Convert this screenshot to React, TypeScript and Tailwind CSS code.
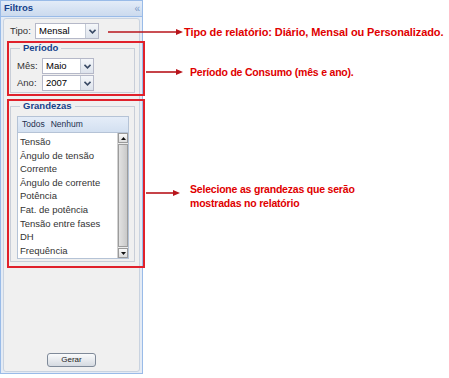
import React from "react";

const itens = [
  "Tensão",
  "Ângulo de tensão",
  "Corrente",
  "Ângulo de corrente",
  "Potência",
  "Fat. de potência",
  "Tensão entre fases",
  "DH",
  "Frequência",
];

type ComboProps = {
  value: string;
  width: string;
};

const Combo = ({ value, width }: ComboProps) => (
  <div className={`flex h-[16px] border border-[#b5b8c8] bg-white ${width}`}>
    <div className="flex-1 pl-[3px] text-[9.5px] leading-[14px] text-black">{value}</div>
    <div className="flex w-[13px] items-center justify-center border-l border-[#c4cbd6] bg-gradient-to-b from-[#f5f7fa] to-[#dde3ec]">
      <svg width="7" height="5" viewBox="0 0 7 5">
        <path d="M0.5 0.8 L3.5 3.8 L6.5 0.8" fill="none" stroke="#3a4b66" strokeWidth="1.6" />
      </svg>
    </div>
  </div>
);

const Legend = ({ label }: { label: string }) => (
  <legend className="ml-[9px] px-[3px] text-[9.5px] font-bold leading-[10px] text-[#15428b]">
    {label}
  </legend>
);

export default function App() {
  return (
    <div className="relative h-[378px] w-[449px] overflow-hidden bg-white font-['Liberation_Sans',Arial,sans-serif]">
      {/* painel Filtros */}
      <div className="flex h-[374px] w-[143px] flex-col border border-[#99bbe8] bg-[#e4ebf5]">
        <div className="flex h-[16px] items-center justify-between border-b border-[#99bbe8] bg-gradient-to-b from-[#e3ecf8] to-[#cbdaee] pl-[3px] pr-[2px]">
          <span className="text-[9.5px] font-bold text-[#15428b]">Filtros</span>
          <span className="text-[10px] leading-none text-[#7d9bc7]">«</span>
        </div>

        <div className="mx-[2px] my-[1px] flex flex-1 flex-col rounded-[3px] border border-[#c9d3e0] bg-[#f0f0f0]">
          {/* Tipo */}
          <div className="mt-[4px] flex items-center pl-[6px]">
            <span className="w-[25px] text-[9.5px] text-[#333]">Tipo:</span>
            <Combo value="Mensal" width="w-[64px]" />
          </div>

          {/* Período */}
          <div className="ml-[3px] mt-[2px] h-[55px] w-[138px] border-2 border-[#e0212b] pl-px">
            <fieldset className="h-[50px] w-[125px] border border-[#c8ced8] pt-[1px]">
              <Legend label="Período" />
              <div className="mt-[4px] flex items-center pl-[6px]">
                <span className="w-[25px] text-[9.5px] text-[#333]">Mês:</span>
                <Combo value="Maio" width="w-[52px]" />
              </div>
              <div className="mt-[1px] flex items-center pl-[6px]">
                <span className="w-[25px] text-[9.5px] text-[#333]">Ano:</span>
                <Combo value="2007" width="w-[52px]" />
              </div>
            </fieldset>
          </div>

          {/* Grandezas */}
          <div className="ml-[3px] mt-[3px] h-[169px] w-[138px] border-2 border-[#e0212b] pl-px">
            <fieldset className="h-[161px] w-[125px] border border-[#c8ced8]">
              <Legend label="Grandezas" />
              <div className="ml-[6px] mt-[5px] w-[112px] border border-[#b5c3d6]">
                <div className="flex h-[16px] items-center gap-[6px] border-b border-[#b5c3d6] bg-gradient-to-b from-[#e5edf8] to-[#d3e0f1] pl-[4px] text-[8.5px] text-[#1d2f4f]">
                  <span>Todos</span>
                  <span>Nenhum</span>
                </div>
                <div className="flex h-[125px] bg-white">
                  <div className="flex-1 pl-[2px] pt-[2px]">
                    {itens.map((item) => (
                      <div key={item} className="h-[13.6px] text-[9.5px] leading-[13.6px] text-[#333]">
                        {item}
                      </div>
                    ))}
                  </div>
                  <div className="flex w-[11px] flex-col border-l border-[#d0d0d0] bg-[#ececec]">
                    <div className="flex h-[10px] items-center justify-center border border-[#9a9a9a] bg-gradient-to-b from-[#fafafa] to-[#dcdcdc]">
                      <svg width="5" height="3" viewBox="0 0 5 3">
                        <path d="M0 3 L2.5 0 L5 3 Z" fill="#111" />
                      </svg>
                    </div>
                    <div className="my-[1px] flex-1 border border-[#9c9c9c] bg-gradient-to-r from-[#e2e2e2] to-[#c9c9c9]" />
                    <div className="flex h-[10px] items-center justify-center border border-[#9a9a9a] bg-gradient-to-b from-[#fafafa] to-[#dcdcdc]">
                      <svg width="5" height="3" viewBox="0 0 5 3">
                        <path d="M0 0 L2.5 3 L5 0 Z" fill="#111" />
                      </svg>
                    </div>
                  </div>
                </div>
              </div>
            </fieldset>
          </div>

          <div className="mb-[4px] mt-auto flex justify-center">
            <button className="h-[14px] w-[49px] rounded-[3px] border border-[#7f8a99] bg-gradient-to-b from-[#fafbfc] to-[#d5dae1] text-[8px] leading-[12px] text-[#222]">
              Gerar
            </button>
          </div>
        </div>
      </div>

      {/* setas */}
      <svg className="pointer-events-none absolute left-0 top-0" width="449" height="378">
        <g stroke="#b8141b" strokeWidth="1.6">
          <line x1="108" y1="32" x2="178" y2="32" />
          <line x1="146" y1="72" x2="178" y2="72" />
          <line x1="146" y1="193" x2="175" y2="193" />
        </g>
        <g fill="#b8141b">
          <path d="M176 29 L183 32 L176 35 Z" />
          <path d="M176 69 L183 72 L176 75 Z" />
          <path d="M173 190 L180 193 L173 196 Z" />
        </g>
      </svg>

      {/* anotações */}
      <div className="absolute left-[184px] top-[25px] text-[11px] font-bold leading-[14px] tracking-[-0.1px] text-[#e00000]">
        Tipo de relatório: Diário, Mensal ou Personalizado.
      </div>
      <div className="absolute left-[190px] top-[65px] text-[10.5px] font-bold leading-[14px] tracking-[-0.2px] text-[#e00000]">
        Período de Consumo (mês e ano).
      </div>
      <div className="absolute left-[190px] top-[182px] text-[10.5px] font-bold leading-[14px] tracking-[-0.2px] text-[#e00000]">
        Selecione as grandezas que serão
        <br />
        mostradas no relatório
      </div>
    </div>
  );
}
